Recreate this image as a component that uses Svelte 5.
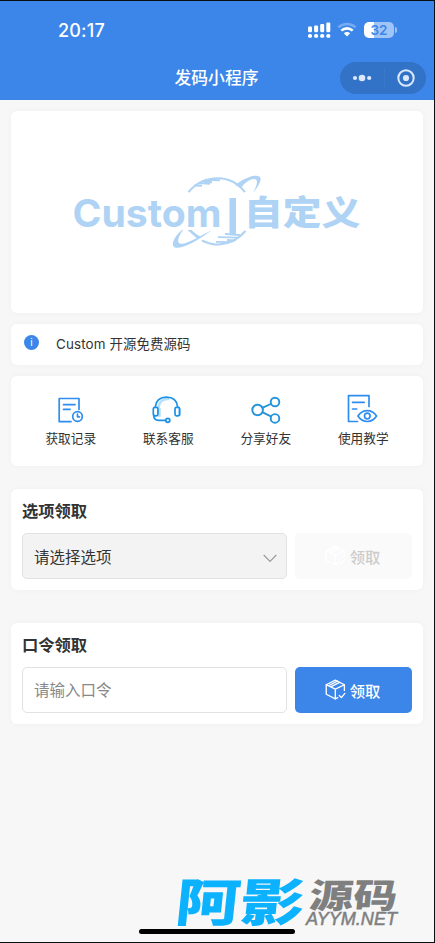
<script>
	let code = $state('');

	const menus = [
		{ id: 'record', label: '获取记录' },
		{ id: 'service', label: '联系客服' },
		{ id: 'share', label: '分享好友' },
		{ id: 'guide', label: '使用教学' }
	];

	// signal bars, left to right
	const bars = [6, 7, 8.5, 10];
</script>

{#snippet box()}
	<svg class="box" viewBox="0 0 22 22" fill="none" stroke="currentColor" stroke-width="1.4" stroke-linejoin="round" stroke-linecap="round">
		<path d="M20.300 12V6L10.800 1.200 1.300 6v10l9.500 4.800 2.600-1.300" />
		<path d="M1.300 6l9.500 4.600L20.300 6M10.800 10.600v10.200M6 8.300l9.300-4.800M3.700 7.100l9.300-4.800" />
		<path d="M15 17.300l2.200 2.200 3.600-4.400" />
	</svg>
{/snippet}

<div class="page">
	<header>
		<div class="status">
			<span class="time">20:17</span>
			<div class="status-icons">
				<svg width="23" height="17" viewBox="0 0 23 17" fill="#fff">
					{#each bars as h, i}
						<rect x={i * 6.1} y={10.4 - h} width="4" height={h - 0.2} rx="1.1" />
						<rect x={i * 6.1} y="11.900" width="4" height="3.800" rx="1.500" />
					{/each}
				</svg>
				<svg class="wifi" width="20" height="16" viewBox="0 0 20 16" fill="none">
					<path d="M1.400 5.400C6.300.9 13.700.9 18.600 5.400" stroke="#76abf1" stroke-width="2.600" />
					<path d="M4.300 8.600c3.300-3 8.100-3 11.400 0" stroke="#fff" stroke-width="2.600" />
					<path d="M6.800 11.200c1.800-1.700 4.600-1.700 6.400 0L10 14.600z" fill="#fff" />
				</svg>
				<div class="battery"><span>32</span></div>
			</div>
		</div>
		<div class="navbar">
			<h1>发码小程序</h1>
			<div class="capsule">
				<svg width="20" height="10" viewBox="0 0 20 10" fill="#dce9fb">
					<circle cx="3" cy="5" r="2.100" />
					<circle cx="10" cy="5" r="3.300" />
					<circle cx="17.200" cy="5" r="2.100" />
				</svg>
				<i></i>
				<svg width="18" height="18" viewBox="0 0 18 18" fill="none" stroke="#dce9fb">
					<circle cx="9" cy="9" r="7.700" stroke-width="2" />
					<circle cx="9" cy="9" r="3.100" fill="#dce9fb" stroke="none" />
				</svg>
			</div>
		</div>
	</header>

	<main>
		<section class="card banner">
			<svg width="300" height="90" viewBox="0 0 300 90" fill="#afd3f4">
				<text class="logo-en" x="3.500" y="61.500" textLength="149" lengthAdjust="spacingAndGlyphs">Custom</text>
				<rect x="160.500" y="33" width="6.500" height="37" />
				<text class="logo-zh" transform="translate(175 60) scale(1.14 1)">自定义</text>
				<!-- upper half of the globe -->
				<g fill="none" stroke="#afd3f4">
					<path d="M119.500 27C128 17 138 13.200 149 13.200c11 0 20 5 27 14" stroke-width="2" />
					<path d="M125 20.500l8 .3M129 18l12 .8M133 16l10 1.200M136 14.800l15 .5" stroke-width="2" />
				</g>
				<!-- lower half of the globe -->
				<g fill="none" stroke="#afd3f4">
					<path d="M133 75.500c6 3 11 4.300 17 4 11-.8 20-6 26.500-13.500" stroke-width="2" />
					<path d="M156 69l15 1M149 72.200l21 .5M158 75l9 .4M147 76.800l14 .4" stroke-width="1.800" />
				</g>
				<!-- orbit -->
				<path d="M166 20c6-4 12-8 19-9.200 9-1.300 9 5-1 17.200 4-8 6-14 1-14-5 .5-9 3.500-13 9z" />
				<path d="M113 65c-7 6-10 12-9 15.500 2 6.500 21-1.500 39-15.500-14 7-27 15.500-32 13.500-4-1.500-1-7.500 3-13.500z" />
				<path d="M118.500 65l9.500 8.500 3.500-2c-4-2-7-4.500-9-6.500z" />
			</svg>
		</section>

		<section class="card notice">
			<span class="info">i</span>
			<p>Custom 开源免费源码</p>
		</section>

		<section class="card menu">
			{#each menus as item (item.id)}
				<div class="menu-item">
					<svg width="32" height="32" viewBox="0 0 32 32" fill="none" stroke="#2f8df0" stroke-width="1.700" stroke-linecap="round" stroke-linejoin="round">
						{#if item.id === 'record'}
							<path d="M16 27.700H4.200V4.500H24V15.500M8.500 10.700h11.500M8.500 15.400h6.500" />
							<circle cx="22.500" cy="22.500" r="4.800" />
							<path d="M22.500 20.200v2.600h2" />
						{:else if item.id === 'service'}
							<g stroke="#b6e0fb" stroke-width="2.500">
								<path d="M6.500 13C7.500 7 12 5 16 5M7.500 15v7M27.500 15v6" />
							</g>
							<g stroke="#1b91e8">
								<path d="M3.300 13C4 6.500 8.500 3.200 14.500 3.200S25 6.500 25.700 13" />
								<rect x="1.300" y="13.300" width="4.600" height="8.500" rx="1.500" />
								<rect x="23" y="13.300" width="4.600" height="8.500" rx="1.500" />
								<path d="M1.700 21c0 4 1.500 5.300 5 5.300h6.800" />
								<circle cx="15.800" cy="26.300" r="2" />
							</g>
						{:else if item.id === 'share'}
							<g stroke="#2493d8" stroke-width="1.900">
								<circle cx="7.600" cy="16" r="5.300" />
								<circle cx="25" cy="8" r="4.300" />
								<circle cx="25" cy="24.400" r="4.300" />
								<path d="M12.700 13.700l8.200-3.700M12.700 18.400l8.200 4" />
							</g>
						{:else}
							<path d="M10.500 27.500H1.500V1.600H22V12.500M5.500 8.300h11.700M5.500 15h4.200" />
							<path d="M10.900 22c5-7.300 13.700-7.300 18.700 0-5 7.300-13.700 7.300-18.700 0z" />
							<circle cx="20.300" cy="22" r="2.800" />
						{/if}
					</svg>
					<span>{item.label}</span>
				</div>
			{/each}
		</section>

		<section class="card claim">
			<h2>选项领取</h2>
			<div class="row">
				<div class="field select">
					<span>请选择选项</span>
					<svg width="14" height="9" viewBox="0 0 14 9" fill="none" stroke="#999" stroke-width="1.100">
						<path d="M.7 1l6.300 6.500L13.300 1" />
					</svg>
				</div>
				<button class="disabled" disabled>{@render box()}领取</button>
			</div>
		</section>

		<section class="card claim password">
			<h2>口令领取</h2>
			<div class="row">
				<input class="field" placeholder="请输入口令" bind:value={code} />
				<button>{@render box()}领取</button>
			</div>
		</section>
	</main>

	<div class="home-bar"></div>
	<svg class="watermark" width="240" height="68" viewBox="0 -10 240 68">
		<g transform="skewX(-6)">
			<text class="mark-big" x="8" y="48" textLength="129" lengthAdjust="spacingAndGlyphs">阿影</text>
			<text class="mark-small" x="141" y="34.500" textLength="88" lengthAdjust="spacingAndGlyphs">源码</text>
		</g>
		<text class="mark-url" x="135" y="52" textLength="91" lengthAdjust="spacingAndGlyphs">AYYM.NET</text>
	</svg>
</div>

<style>
	:global(body) {
		margin: 0;
	}

	.page {
		position: relative;
		box-sizing: border-box;
		width: 435px;
		height: 943px;
		overflow: hidden;
		border: solid #0b0d12;
		border-width: 1px 1px 1px 0;
		background: #f7f7f7;
		color: #333;
		font-family: Inter, 'Noto Sans CJK SC', sans-serif;
	}

	header {
		height: 99px;
		background: #3c86e9;
		color: #fff;
	}

	.status {
		display: flex;
		align-items: center;
		justify-content: space-between;
		height: 56px;
		padding: 1px 40px 0 58px;
	}

	.time {
		font-size: 18px;
		font-weight: 500;
		letter-spacing: 0.2px;
	}

	.status-icons {
		display: flex;
		align-items: center;
	}

	.wifi {
		margin: 0 7px 0 6px;
	}

	.battery {
		position: relative;
		width: 30px;
		height: 16px;
		border-radius: 5px;
		background: linear-gradient(to right, #fff 32%, #9fc4f5 32%);
		color: #3c86e9;
		font-size: 13.5px;
		font-weight: 600;
		line-height: 16px;
		text-align: center;
	}

	.battery::after {
		content: '';
		position: absolute;
		top: 5px;
		right: -3px;
		width: 2px;
		height: 6px;
		border-radius: 0 2px 2px 0;
		background: #9fc4f5;
	}

	.navbar {
		display: grid;
		grid-template-columns: 1fr auto 1fr;
		align-items: center;
		height: 41px;
		margin-top: -1px;
		padding-right: 8px;
		padding-left: 7px;
	}

	h1 {
		grid-column: 2;
		margin: 0;
		font-size: 16.8px;
		font-weight: 500;
		line-height: 24px;
	}

	.capsule {
		display: flex;
		align-items: center;
		justify-content: center;
		gap: 12px;
		justify-self: end;
		width: 86px;
		height: 32px;
		border-radius: 16px;
		background: #3272c7;
	}

	.capsule i {
		width: 1px;
		height: 20px;
		background: #3b79cc;
	}

	main {
		padding: 11px 11px 0;
	}

	.card {
		box-sizing: border-box;
		border-radius: 6px;
		background: #fff;
		box-shadow: 0 0 6px rgba(0, 0, 0, 0.035);
	}

	.banner {
		height: 202px;
		padding: 54px 0 0 58px;
	}

	.banner svg {
		display: block;
	}

	.logo-en {
		font: 700 38.5px Inter, sans-serif;
	}

	.logo-zh {
		font: 900 34px 'Noto Sans CJK SC', sans-serif;
	}

	.notice {
		display: flex;
		align-items: center;
		height: 41px;
		margin-top: 11px;
		padding-left: 13px;
	}

	.info {
		width: 15px;
		height: 15px;
		margin: -4px 17px 0 0;
		border-radius: 50%;
		background: #3c86e9;
		color: #fff;
		font-size: 10px;
		line-height: 15px;
		text-align: center;
	}

	.notice p {
		margin: -3px 0 0;
		font-size: 13.4px;
		letter-spacing: 0.13px;
	}

	.menu {
		display: grid;
		grid-template-columns: repeat(4, 1fr);
		height: 90px;
		margin-top: 11px;
		padding: 18px 11px 0;
	}

	.menu-item {
		display: flex;
		flex-direction: column;
		align-items: center;
		font-size: 12.7px;
		line-height: 18px;
	}

	.menu-item span {
		margin-top: 4px;
	}

	.claim {
		height: 101px;
		margin-top: 23px;
		padding: 11px 11px 0;
	}

	.password {
		margin-top: 33px;
	}

	h2 {
		margin: 0 0 10px;
		font-size: 16.3px;
		font-weight: 700;
		line-height: 23px;
	}

	.row {
		display: flex;
		gap: 8px;
	}

	.field {
		box-sizing: border-box;
		width: 265px;
		height: 46px;
		padding: 0 9px 0 11px;
		border: 1px solid #e2e2e2;
		border-radius: 5px;
		background: #fff;
		font-family: inherit;
		font-size: 15.5px;
	}

	.field::placeholder {
		color: #888;
		opacity: 1;
	}

	.select {
		display: flex;
		align-items: center;
		justify-content: space-between;
		background: #f3f3f3;
	}

	.select svg {
		margin-top: 5px;
	}

	button {
		display: flex;
		flex: 1;
		align-items: center;
		justify-content: center;
		gap: 4px;
		height: 46px;
		padding: 0 2px 1px 0;
		border: 0;
		border-radius: 5px;
		background: #3c86e9;
		color: #fff;
		font-family: inherit;
		font-size: 15.3px;
		font-weight: 500;
	}

	.disabled {
		background: #fafafa;
		color: #ccc;
	}

	.disabled .box {
		color: #fff;
	}

	.box {
		width: 21px;
		height: 21px;
	}

	.home-bar {
		position: absolute;
		bottom: 8px;
		left: 139px;
		width: 156px;
		height: 5px;
		border-radius: 3px;
		background: #000;
	}

	.watermark {
		position: absolute;
		bottom: 11px;
		left: 171px;
		overflow: visible;
	}

	.mark-big {
		fill: #0db2ff;
		font: 900 51px 'Noto Sans CJK SC', sans-serif;
	}

	.mark-small {
		fill: #7f7f7f;
		font: 900 34px 'Noto Sans CJK SC', sans-serif;
	}

	.mark-url {
		fill: #7f7f7f;
		stroke: #7f7f7f;
		stroke-width: 0.5;
		font: italic 400 18px 'Liberation Sans', sans-serif;
	}
</style>
